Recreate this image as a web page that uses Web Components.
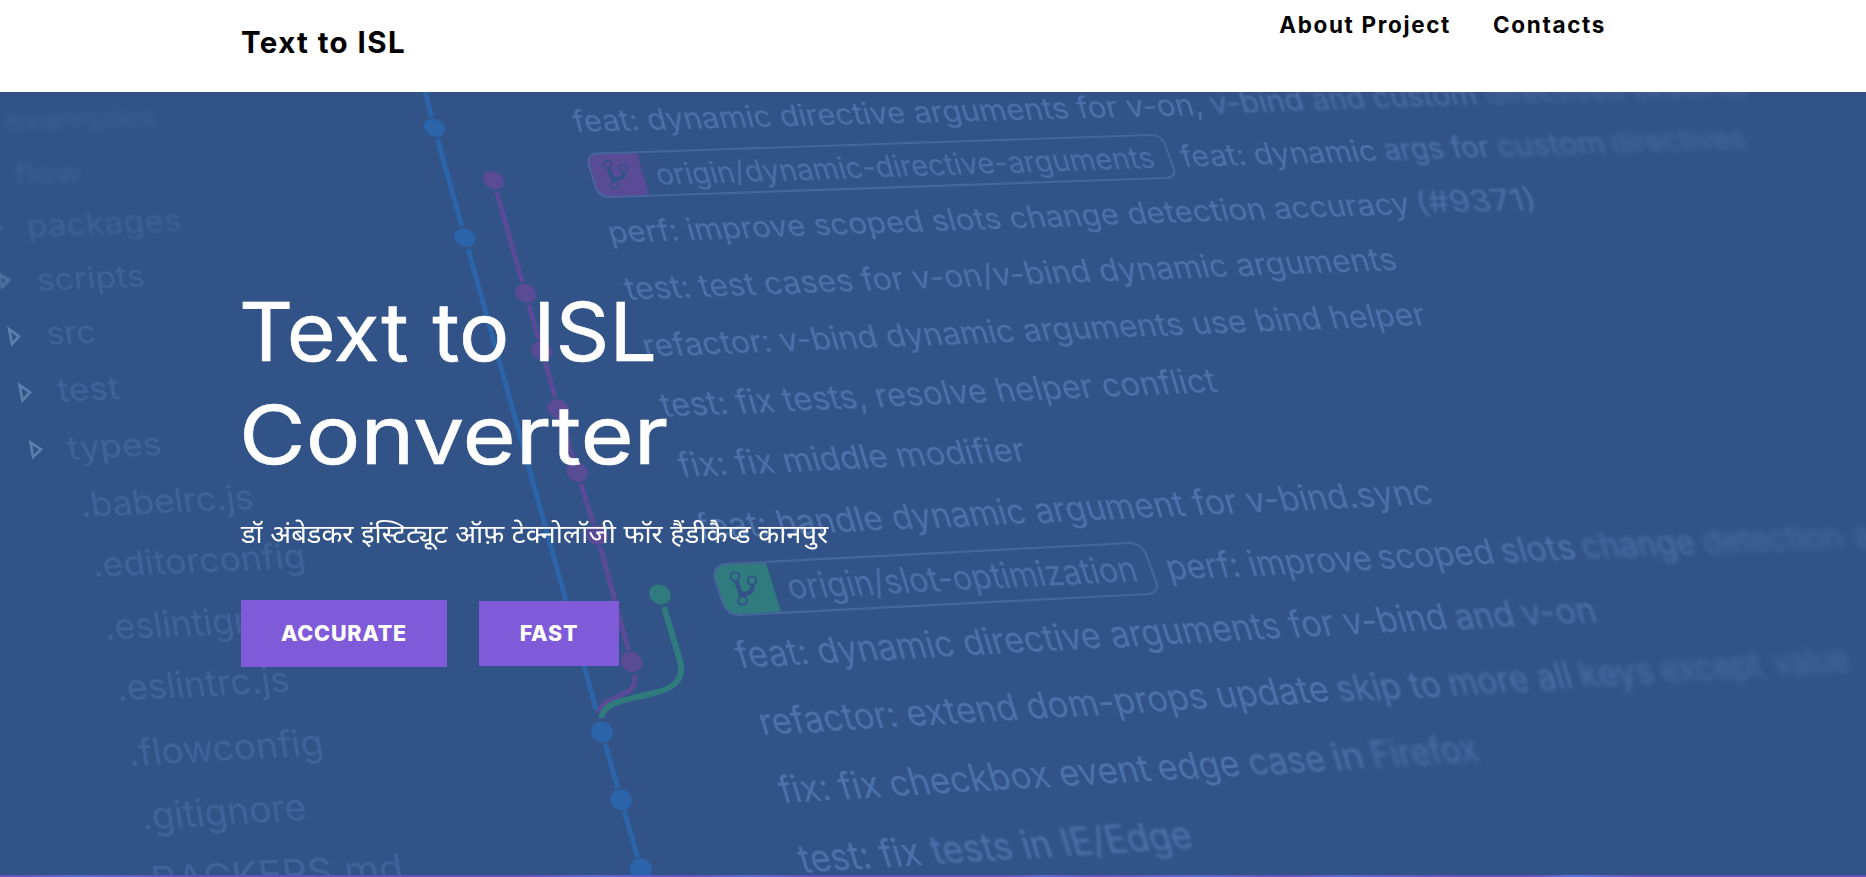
<!DOCTYPE html>
<html lang="en">
<head>
<meta charset="utf-8">
<title>Text to ISL</title>
<style>
html, body { margin: 0; height: 100%; overflow: hidden; }
body { font-family: Inter, "Noto Sans", sans-serif; }
</style>
</head>
<body>
<isl-page></isl-page>
<script>
class SiteHeader extends HTMLElement {
  constructor() {
    super();
    this.attachShadow({ mode: 'open' }).innerHTML = `
      <style>
        :host { display: block; height: 92px; background: #fff; color: #000; }
        .bar { width: 1384px; margin: 0 auto; display: flex; justify-content: space-between; align-items: flex-start; }
        .brand { margin-top: 23px; font-weight: 700; font-size: 29.5px; line-height: 38px; letter-spacing: 1.4px; }
        nav { display: flex; gap: 42px; padding: 9px 19px 0 0; }
      </style>
      <div class="bar"><div class="brand"><slot name="brand"></slot></div><nav><slot></slot></nav></div>`;
  }
}
customElements.define('site-header', SiteHeader);

class NavLink extends HTMLElement {
  constructor() {
    super();
    this.attachShadow({ mode: 'open' }).innerHTML = `
      <style>
        :host { display: block; font-weight: 700; font-size: 22.5px; line-height: 32px; letter-spacing: 1.65px; white-space: nowrap; }
      </style><slot></slot>`;
  }
}
customElements.define('nav-link', NavLink);

class FeatureButton extends HTMLElement {
  constructor() {
    super();
    this.attachShadow({ mode: 'open' }).innerHTML = `
      <style>
        :host { display: flex; align-items: center; justify-content: center; box-sizing: border-box;
          width: var(--w); height: var(--h); padding-bottom: 2px; background: #7f5bd9; color: #fff;
          font-weight: 800; font-size: 21.5px; line-height: 32px; letter-spacing: .8px; }
      </style><slot></slot>`;
  }
}
customElements.define('feature-button', FeatureButton);

class CommitBackdrop extends HTMLElement {
  constructor() {
    super();
    // [text, x1, y1, x2, y2, blur, opacity] : baseline start and end
    const log = [
      ['feat: dynamic directive arguments for v-on,', 576, 131, 1205, 114, .3, 1],
      ['v-bind', 1213, 113, 1306, 109, .8, 1], ['and custom', 1315, 109, 1479, 103.5, 1.5, .9],
      ['directives (#9373)', 1488, 103, 1750, 95, 3.2, .75],
      ['origin/dynamic-directive-arguments', 659, 184, 1157, 167, .3, .95],
      ['feat: dynamic', 1184, 166, 1379, 160, .5, 1], ['args for', 1387, 159, 1492, 156, 1, 1],
      ['custom', 1500, 155.5, 1607, 152, 1.9, .9], ['directives', 1613, 152, 1748, 147, 3, .8],
      ['perf: improve scoped slots change detection accuracy', 611, 242, 1412, 213, .3, 1],
      ['(#9371)', 1419, 212, 1539, 209, .9, .95],
      ['test: test cases for v-on/v-bind dynamic arguments', 628, 299, 1399, 269, .3, 1],
      ['refactor: v-bind dynamic arguments use bind helper', 646, 356, 1428, 324, .3, 1],
      ['test: fix tests, resolve helper conflict', 664, 416, 1219, 391, .3, 1],
      ['fix: fix middle modifier', 682, 476, 1028, 460, .3, 1],
      ['feat: handle dynamic argument for v-bind.sync', 701, 538, 1435, 503, .3, 1],
      ['origin/slot-optimization', 791, 598, 1140, 580, .3, .95],
      ['perf: improve', 1170, 579, 1375, 569, .4, 1], ['scoped', 1381, 568.5, 1497, 562.5, .7, 1],
      ['slots', 1504, 562, 1578, 558, 1.1, 1], ['change', 1585, 557.5, 1698, 553, 1.9, .95],
      ['detection', 1706, 552.5, 1845, 547, 3, .82], ['accuracy', 1857, 546, 1985, 541, 3.2, .75],
      ['feat: dynamic directive arguments for v-bind', 740, 667, 1450, 628, .4, 1],
      ['and', 1458, 628, 1517, 625, 1, 1], ['v-on', 1525, 624.5, 1599, 621, 1.5, .95],
      ['refactor: extend dom-props update', 763, 734, 1332, 700.5, .4, 1],
      ['skip to', 1340, 700.5, 1444, 696, 1, 1], ['more all', 1452, 695, 1575, 687, 1.8, .95],
      ['keys', 1583, 686.5, 1657, 682, 2.4, .88], ['except', 1664, 681.5, 1765, 675.5, 3.2, .8],
      ['value', 1777, 674.5, 1852, 670, 3.6, .75],
      ['fix: fix checkbox event', 783, 802, 1153, 780, .4, 1], ['edge', 1161, 779.5, 1243, 775, .7, 1],
      ['case', 1252, 774, 1328, 770, 1.2, 1],
      ['in', 1336, 769.5, 1367, 767, 1.5, 1], ['Firefox', 1375, 767, 1481, 760, 2, .95],
      ['test: fix', 803, 872, 924, 864, .5, 1], ['tests in', 935, 863, 1055, 856, .8, 1],
      ['IE/Edge', 1065, 855, 1195, 847, 1.5, 1]
    ];
    const tree = [
      ['examples', 6, 130, 157, 126, 3, .75], ['flow', 16, 184, 83, 181.5, 2.5, .85],
      ['packages', 28, 236, 183, 230, 1.2, .9], ['scripts', 38, 290, 146, 285.5, .7, .95],
      ['src', 48, 344, 97, 342, .6, 1], ['test', 59, 401, 121, 398, .5, 1],
      ['types', 69, 459, 163, 454, .5, 1], ['.babelrc.js', 82, 516, 255, 508, .5, 1],
      ['.editorconfig', 94, 576, 307, 567, .5, 1], ['.eslintignore', 106, 639, 311, 629, .5, 1],
      ['.eslintrc.js', 118, 700, 291, 691, .5, 1], ['.flowconfig', 130, 765, 325, 754, .5, 1],
      ['.gitignore', 143, 829, 308, 819, .5, 1], ['BACKERS.md', 154, 893, 405, 880, .6, 1]
    ];
    const line = (fill, grow) => ([t, x1, y1, x2, y2, blur, op]) => {
      const len = Math.hypot(x2 - x1, y2 - y1);
      const k = .13 + .15 * Math.min(x1 / 600, 1.15);
      const size = 25 + grow + y1 * .0125;
      return `<text transform="matrix(${(x2 - x1) / len} ${(y2 - y1) / len} ${k} 1 ${x1} ${y1 + 1})" font-size="${size}"
        textLength="${len}" lengthAdjust="spacingAndGlyphs" fill="${fill}" opacity="${op}" style="filter:blur(${blur}px)">${t}</text>`;
    };
    const node = (x, y, ry) => `<ellipse cx="${x}" cy="${y}" rx="11.2" ry="${ry}" transform="rotate(28 ${x} ${y})"/>`;
    // joins consecutive nodes, leaving a gap around each disc
    const link = (x1, y1, x2, y2, a = 12, b = 12) => {
      const d = Math.hypot(x2 - x1, y2 - y1), u = (x2 - x1) / d, v = (y2 - y1) / d;
      return `M${x1 + u * a} ${y1 + v * a}L${x2 - u * b} ${y2 - v * b}`;
    };
    const blue = [[434.4, 127.7, 8.5], [465, 237.7, 8.8], [602, 732, 10.2], [621, 800, 10.4], [641, 869, 10.6]];
    const purple = [[493.5, 180.3, 8.6], [525.6, 293.3, 9], [542, 351, 9.2], [558.5, 409, 9.4], [577, 472, 9.6], [597, 535, 9.8], [631.5, 662, 10]];
    const chain = p => p.slice(1).map((n, i) => link(p[i][0], p[i][1], n[0], n[1])).join('');
    const fork = `<g fill="none" stroke="#325387" stroke-width="2"><circle cx="0" cy="0" r="4.3"/><circle cx="17" cy="4" r="4.3"/><circle cx="7.500" cy="24" r="4.3"/>
      <path stroke-width="4.5" d="M1.500 5L6.500 19.500M17.500 9C18.500 15 14 17 7 17.500"/></g>`;
    this.attachShadow({ mode: 'open' }).innerHTML = `
      <style>
        :host { display: block; background: #325387; }
        svg { display: block; width: 100%; height: 100%; font-family: Inter, sans-serif; }
      </style>
      <svg viewBox="0 92 1866 783" preserveAspectRatio="xMidYMin slice" aria-hidden="true">
        <g>${tree.map(line('#41639b', 2)).join('')}</g>
        <g fill="none" stroke="#5c80ae" stroke-width="2.6">
          <path d="M9 329L19 336.500 12 344Z"/><path d="M19.500 385L30 392.500 22.500 400.500Z"/><path d="M30.500 442.500L41 449.500 33 457Z"/>
          <path d="M-2 274L9 280 2 287Z" style="filter:blur(1px)" opacity=".85"/><circle cx="-1" cy="228" r="2" opacity=".4" style="filter:blur(1.5px)"/>
        </g>
        <g fill="none" stroke="#46669b" stroke-width="2.2">
          <path fill="#5a4b97" stroke="none" d="M599 154L637 153 649 194.500 611 197Q599 197 595 187L588.500 164Q587 155 599 154Z"/>
          <path d="M598 153.500L1150 135Q1161 135 1165 144L1174 169Q1176 177 1166 178L612 197Q600 198 596 188L588.500 164Q587 154 598 153.500Z"/>
          <path fill="#2f7b7d" stroke="none" d="M725 564L766 563 781 611.500 739 614.500Q728 614 723 603L715 578Q713 566 725 564Z"/>
          <path d="M725 564L1130 543Q1141 544 1146 554L1157 584Q1158 593 1148 594L740 615Q727 615 723 603L714.500 578Q713 566 725 564Z"/>
        </g>
        <g transform="translate(607.500 164.500) scale(.93 .86)">${fork}</g>
        <g transform="translate(735 576.500)">${fork}</g>
        <g fill="none" stroke-width="5">
          <path stroke="#2b64a8" d="M424.500 88L431.500 117${link(434.4, 127.7, 465, 237.7)}${link(465, 237.7, 598, 716, 12, 6)}${chain(blue.slice(2))}"/>
          <path stroke="#5a4b97" d="${chain(purple)}M635 675C636 690 628 692 617 697C607 701 600 705 599 713"/>
          <path stroke="#2f7b7d" stroke-width="6" d="M664 607L680 661C685 680 674 689 650 694C622 701 604 702 601 718"/>
        </g>
        <g fill="#2b64a8">${blue.map(n => node(...n)).join('')}</g>
        <g fill="#5a4b97">${purple.map(n => node(...n)).join('')}</g>
        <g fill="#2f7b7d">${node(660, 594.5, 9.6)}</g>
        <g>${log.map(line('#4d72ab', 2.2)).join('')}</g>
      </svg>`;
  }
}
customElements.define('commit-backdrop', CommitBackdrop);

class HeroBanner extends HTMLElement {
  constructor() {
    super();
    this.attachShadow({ mode: 'open' }).innerHTML = `
      <style>
        :host { display: grid; height: 783px; overflow: hidden; color: #fff; }
        commit-backdrop, .copy { grid-area: 1 / 1; min-height: 0; }
        .copy { z-index: 1; width: 1384px; margin: 0 auto; padding-top: 189px; }
        h1 { margin: 0; width: 560px; font-weight: 400; font-size: 81px; line-height: 103px; -webkit-text-stroke: .6px #fff; }
        p { margin: 27px 0 0; font-size: 26px; line-height: 40px; white-space: nowrap; }
        .row { display: flex; align-items: center; gap: 32px; margin-top: 46px; }
      </style>
      <commit-backdrop></commit-backdrop>
      <div class="copy"><h1><slot name="title"></slot></h1><p><slot name="sub"></slot></p><div class="row"><slot></slot></div></div>`;
  }
}
customElements.define('hero-banner', HeroBanner);

class IslPage extends HTMLElement {
  constructor() {
    super();
    this.attachShadow({ mode: 'open' }).innerHTML = `
      <style>
        :host { display: block; }
        .l { display: block; width: max-content; white-space: nowrap; transform: scaleX(var(--s)); transform-origin: 0 50%; }
        .t { margin-left: -2px; }
        .edge { height: 2px; background: linear-gradient(90deg, #6a4bbb, #5f66d6 4%, #6a4bbb 10%, #6a4bbb 28%, #5f66d6 32%, #6a4bbb 37%, #5f66d6 40%, #6a4bbb 44%, #6a4bbb 54%, #5f66d6 56%, #6a4bbb 59%, #5f66d6 64%, #6a4bbb 69%, #5f66d6 72%, #6a4bbb 78%, #6a4bbb 82%, #5f70e8 84.5%, #6a4bbb 88%); }
      </style>
      <site-header><span slot="brand">Text to ISL</span><nav-link>About Project</nav-link><nav-link>Contacts</nav-link></site-header>
      <hero-banner>
        <span slot="title"><span class="l t" style="--s:1.037">Text to ISL</span><span class="l t" style="--s:1.127">Converter</span></span>
        <span slot="sub" class="l" style="--s:1.05">डॉ अंबेडकर इंस्टिट्यूट ऑफ़ टेक्नोलॉजी फॉर हैंडीकैप्ड कानपुर</span>
        <feature-button style="--w:206px;--h:67px">ACCURATE</feature-button>
        <feature-button style="--w:140px;--h:65px">FAST</feature-button>
      </hero-banner>
      <div class="edge"></div>`;
  }
}
customElements.define('isl-page', IslPage);
</script>
</body>
</html>
